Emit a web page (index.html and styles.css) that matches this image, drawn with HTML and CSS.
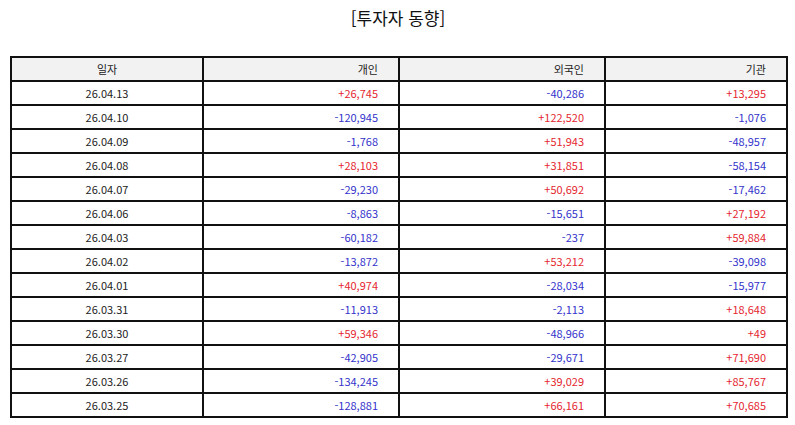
FILE: index.html
```html
<!DOCTYPE html>
<html lang="ko">
<head>
<meta charset="utf-8">
<link rel="stylesheet" href="styles.css">
</head>
<body>
<div class="page">
  <h1 class="title">[투자자 동향]</h1>
  <table class="grid">
    <colgroup>
      <col class="c1"><col class="c2"><col class="c3"><col class="c4">
    </colgroup>
    <thead>
      <tr><th class="center">일자</th><th>개인</th><th>외국인</th><th>기관</th></tr>
    </thead>
    <tbody>
      <tr><td class="center">26.04.13</td><td class="up">+26,745</td><td class="down">-40,286</td><td class="up">+13,295</td></tr>
      <tr><td class="center">26.04.10</td><td class="down">-120,945</td><td class="up">+122,520</td><td class="down">-1,076</td></tr>
      <tr><td class="center">26.04.09</td><td class="down">-1,768</td><td class="up">+51,943</td><td class="down">-48,957</td></tr>
      <tr><td class="center">26.04.08</td><td class="up">+28,103</td><td class="up">+31,851</td><td class="down">-58,154</td></tr>
      <tr><td class="center">26.04.07</td><td class="down">-29,230</td><td class="up">+50,692</td><td class="down">-17,462</td></tr>
      <tr><td class="center">26.04.06</td><td class="down">-8,863</td><td class="down">-15,651</td><td class="up">+27,192</td></tr>
      <tr><td class="center">26.04.03</td><td class="down">-60,182</td><td class="down">-237</td><td class="up">+59,884</td></tr>
      <tr><td class="center">26.04.02</td><td class="down">-13,872</td><td class="up">+53,212</td><td class="down">-39,098</td></tr>
      <tr><td class="center">26.04.01</td><td class="up">+40,974</td><td class="down">-28,034</td><td class="down">-15,977</td></tr>
      <tr><td class="center">26.03.31</td><td class="down">-11,913</td><td class="down">-2,113</td><td class="up">+18,648</td></tr>
      <tr><td class="center">26.03.30</td><td class="up">+59,346</td><td class="down">-48,966</td><td class="up">+49</td></tr>
      <tr><td class="center">26.03.27</td><td class="down">-42,905</td><td class="down">-29,671</td><td class="up">+71,690</td></tr>
      <tr><td class="center">26.03.26</td><td class="down">-134,245</td><td class="up">+39,029</td><td class="up">+85,767</td></tr>
      <tr><td class="center">26.03.25</td><td class="down">-128,881</td><td class="up">+66,161</td><td class="up">+70,685</td></tr>
    </tbody>
  </table>
</div>
</body>
</html>
```
FILE: styles.css
```css
html, body {
  margin: 0;
  padding: 0;
  background: #ffffff;
}
body {
  font-family: "Noto Sans CJK KR", "Noto Sans", sans-serif;
  color: #222222;
}
.page {
  padding: 6px 9px 0 10px;
}
.title {
  margin: 0;
  font-size: 17px;
  font-weight: normal;
  text-align: center;
  line-height: 24px;
  height: 50px;
  color: #111111;
}
.grid {
  width: 776px;
  border-collapse: collapse;
  table-layout: fixed;
  font-size: 11px;
}
.c1 { width: 192px; }
.c2 { width: 196px; }
.c3 { width: 206px; }
.c4 { width: 182px; }
.grid th, .grid td {
  border: 2px solid #111111;
  height: 22px;
  box-sizing: border-box;
  padding: 0 20px 0 4px;
  text-align: right;
  line-height: 14px;
  font-weight: normal;
  color: #222222;
}
.grid tr {
  height: 24px;
}
.grid th {
  background: #f2f2f2;
}
.grid .center {
  text-align: center;
  padding: 0;
}
.grid td.up { color: #e5262f; }
.grid td.down { color: #3333cc; }
```
